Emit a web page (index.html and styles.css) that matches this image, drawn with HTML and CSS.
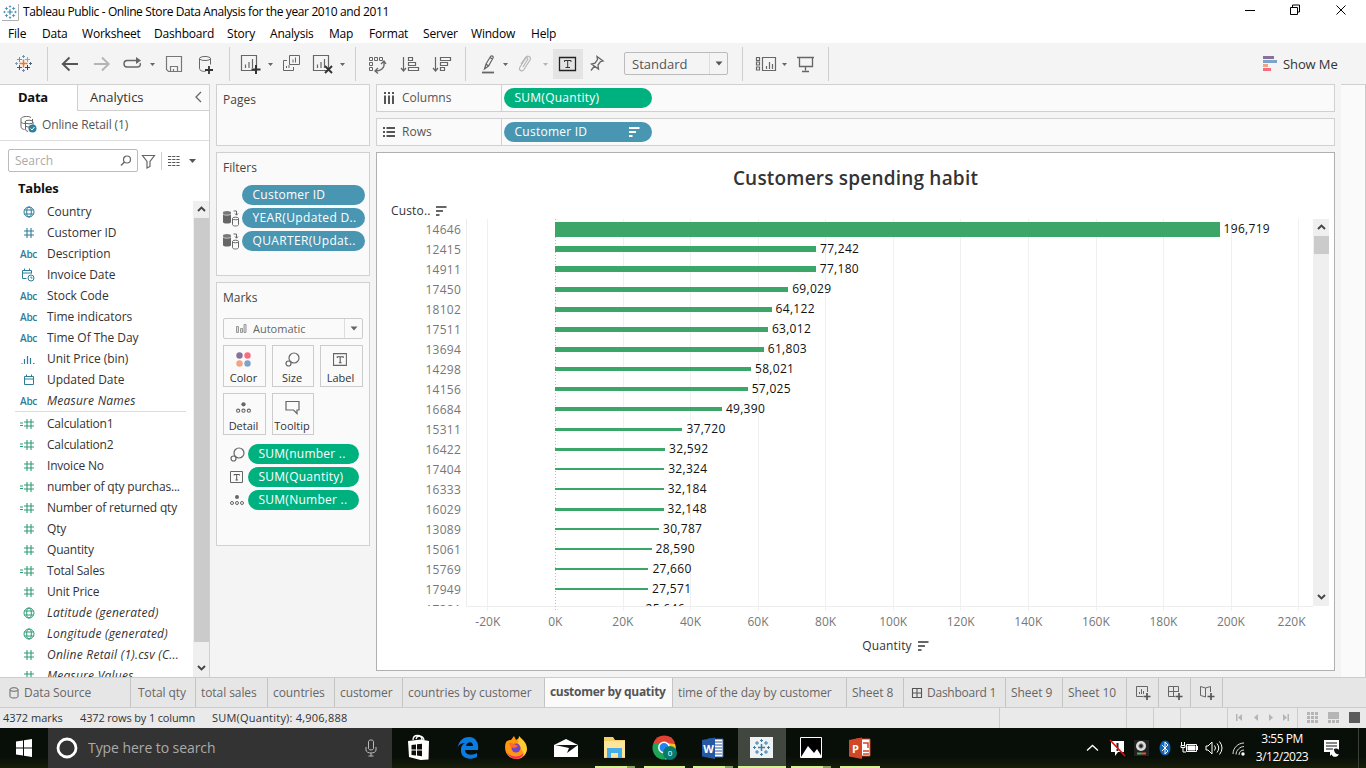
FILE: index.html
```html
<!DOCTYPE html>
<html lang="en">
<head>
<meta charset="utf-8">
<title>Tableau Public - Online Store Data Analysis</title>
<link rel="stylesheet" href="styles.css">
</head>
<body>
<svg class="defs" width="0" height="0">
  <symbol id="plus-logo" viewBox="0 0 18 18"><path d="M9 5.500v7M5.500 9h7" stroke-width="1.500"/><path d="M9 .5v3M7.500 2h3M9 14.500v3M7.500 16h3M2 7.500v3M.5 9h3M16 7.500v3M14.500 9h3M4.500 2.500v4M2.500 4.500h4M13.500 2.500v4M11.500 4.500h4M4.500 11.500v4M2.500 13.500h4M13.500 11.500v4M11.500 13.500h4" stroke-width="1"/></symbol>
  <symbol id="globe" viewBox="0 0 12 12"><g fill="none" stroke="currentColor"><circle cx="6" cy="6" r="5"/><ellipse cx="6" cy="6" rx="2.300" ry="5"/><path d="M1.500 4h9M1.500 8h9"/></g></symbol>
  <symbol id="hash" viewBox="0 0 12 12"><path d="M4 1v10M8 1v10M1 4h10M1 8h10" fill="none" stroke="currentColor" stroke-width="1.100"/></symbol>
  <symbol id="calc" viewBox="0 0 16 12"><path d="M8 1v10M12 1v10M5 4h10M5 8h10M1 5h3M1 7.500h3" fill="none" stroke="currentColor" stroke-width="1.100"/></symbol>
  <symbol id="cal" viewBox="0 0 12 12"><path d="M1.500 2.500h9v8h-9zM1.500 5h9M3.500.5v2M8.500.5v2" fill="none" stroke="currentColor"/></symbol>
  <symbol id="caltime" viewBox="0 0 14 14"><path d="M5.500 10.500h-4v-8h9v3M1.500 5h9M3.500.5v2M8.500.5v2" fill="none" stroke="currentColor"/><circle cx="10" cy="10" r="3" fill="none" stroke="currentColor"/><path d="M10 8.500V10h1.500" fill="none" stroke="currentColor"/></symbol>
  <symbol id="bin" viewBox="0 0 14 12"><path d="M.5 10.500h1M3.500 6v5M6.500 3v8M9.500 5v6M12 10.500h1.500" fill="none" stroke="currentColor" stroke-width="1.200"/></symbol>
  <symbol id="sort" viewBox="0 0 11 10"><path d="M0 1h10.500M0 5h7M0 9h3.500" stroke="currentColor" stroke-width="2"/></symbol>
  <symbol id="caret" viewBox="0 0 8 5"><path d="M.5.5h7L4 4.500z" fill="currentColor"/></symbol>
  <symbol id="chart" viewBox="0 0 22 20"><path d="M1.500 1.500h15v15h-15zM5.500 14v-3.500M9 14V8M12.500 14V5" fill="none" stroke="#666" stroke-width="1.200"/></symbol>
  <symbol id="size" viewBox="0 0 15 15"><g fill="none" stroke="#666" stroke-width="1.200"><circle cx="9" cy="6" r="5"/><circle cx="3.500" cy="11.500" r="2.500" fill="#fafafa"/></g></symbol>
  <symbol id="label" viewBox="0 0 14 12"><path d="M.5.5h12v11H.5z" fill="none" stroke="#666"/><path d="M4 4.500v-1h5.500v1M6.700 3.500v5.500M5.500 9h2.500" fill="none" stroke="#555"/></symbol>
  <symbol id="detail" viewBox="0 0 14 12"><circle cx="7" cy="3" r="2" fill="#666"/><g fill="none" stroke="#666"><circle cx="2" cy="9" r="1.500"/><circle cx="7" cy="9" r="1.500"/><circle cx="12" cy="9" r="1.500"/></g></symbol>
  <symbol id="ctx" viewBox="0 0 16 16"><path d="M0 2.500v9c0 2 8 2 8 0v-9z" fill="#666"/><ellipse cx="4" cy="2" rx="4" ry="1.500" fill="#777"/><path d="M0 3.500c1 1.500 7 1.500 8 0" fill="none" stroke="#fff" stroke-width=".7"/><g fill="#fafafa" stroke="#666"><path d="M9.500 8v6c0 2 6 2 6 0V8"/><ellipse cx="12.500" cy="8" rx="3" ry="1.300"/></g><path d="M10.500.5h3v4M12 3l1.500 1.700L15 3" fill="none" stroke="#666"/></symbol>
</svg>

<header class="titlebar">
  <svg class="app-icon" viewBox="0 0 18 18"><path d="M17.500 0v17.500H0" fill="none" stroke="#aaa"/><use href="#plus-logo" x="1" y="1" width="15" height="15" stroke="#3b86aa"/></svg>
  <span class="title">Tableau Public - Online Store Data Analysis for the year 2010 and 2011</span>
  <svg class="winbtns" viewBox="0 0 110 14"><path d="M1 7.500h10M46.500 4.500h7v7h-7zM48.500 4v-2h7v7h-2M92.500 2.500l9 9M101.500 2.500l-9 9" fill="none" stroke="#000"/></svg>
</header>
<nav class="menubar"><span class="m1">File</span><span class="m2">Data</span><span class="m3">Worksheet</span><span class="m4">Dashboard</span><span class="m5">Story</span><span class="m6">Analysis</span><span class="m7">Map</span><span class="m8">Format</span><span class="m9">Server</span><span class="m10">Window</span><span>Help</span></nav>

<div class="toolbar">
  <svg class="tools" width="620" height="41" viewBox="0 0 620 41" fill="none">
    <path d="M47.500 4v34M229.500 4v34M355.500 4v34M465.500 4v34" stroke="#cfcfcf"/>
    <path d="M23.500 16.500v8M19.500 20.500h8" stroke="#e8762d" stroke-width="1.500"/>
    <path d="M23.500 12v3M22 13.500h3" stroke="#7099a6"/><path d="M23.500 26v3M22 27.500h3" stroke="#7e84b5"/><path d="M16.500 19v3M15 20.500h3" stroke="#7b9fc1"/><path d="M30.500 19v3M29 20.500h3" stroke="#596879"/>
    <path d="M19.500 14v5M17 16.500h5" stroke="#5c9dad"/><path d="M27.500 14v5M25 16.500h5" stroke="#eb912c"/><path d="M19.500 22v5M17 24.500h5" stroke="#c72037"/><path d="M27.500 22v5M25 24.500h5" stroke="#1f457e"/>
    <path d="M78 21H63M69.500 14.500L62.800 21l6.700 6.500" stroke="#555" stroke-width="1.900"/>
    <path d="M94 21h15M102 14.500l6.700 6.500-6.700 6.500" stroke="#b4b4b4" stroke-width="1.900"/>
    <path d="M134 17.500h-7c-4 0-4 6.500 0 6.500h10c3 0 4-2 3-4M132 17.500h7" stroke="#666" stroke-width="1.400"/><path d="M136 14l5 3.500-5 3.500z" fill="#666"/>
    <path d="M166.500 13.500h15v15h-13l-2-2zM170.500 28v-4.500h7V28M173.500 28v-2" stroke="#777" stroke-width="1.200"/>
    <path d="M199.500 15.500v10c0 2 3 3 6 3M210.500 15.500v6" stroke="#666"/><ellipse cx="205" cy="15.500" rx="5.500" ry="2" stroke="#666"/><path d="M209 23v8M205 27h8" stroke="#333" stroke-width="1.800"/>
    <use href="#chart" x="240" y="11" width="22" height="20"/><path d="M256 22v9M251.500 26.500h9" stroke="#333" stroke-width="2"/>
    <path d="M289.500 12.500h10v9h-10zM287 17.500h-3.500v10h10V24M293 19.500v-3M295.500 19.500v-5M286.500 25v-2M289 25v-3" stroke="#666"/>
    <use href="#chart" x="312" y="11" width="22" height="20"/><path d="M325 23l7 7M332 23l-7 7" stroke="#333" stroke-width="1.900"/>
    <path d="M369.500 14.500h3v3h-3zM374.500 14.500h3v3h-3zM379.500 14.500h3v3h-3zM369.500 19.500h3v3h-3zM369.500 24.500h3v3h-3z" stroke="#666"/><path d="M384 19c1 6-3 9-8 9M381 21l3-3 2 3M378 25l-3 3 3 2.500" stroke="#666" stroke-width="1.300"/>
    <path d="M403.500 14v13M401 25l2.500 3 2.500-3M408.500 14.500h4v3h-4zM408.500 19.500h7v3h-7zM408.500 24.500h10v3h-10z" stroke="#666" stroke-width="1.200"/>
    <path d="M435.500 14v13M433 25l2.500 3 2.500-3M440.500 14.500h10v3h-10zM440.500 19.500h7v3h-7zM440.500 24.500h4v3h-4z" stroke="#666" stroke-width="1.200"/>
    <path d="M484.500 26l1.500-5 4.500-7.500c1-1.500 3.500 0 2.500 1.500L488.500 23zM486 21l2.500 2M490 14.500l2.500 1.500" stroke="#666" stroke-width="1.200"/><path d="M482 29.500h12" stroke="#666" stroke-width="1.800"/>
    <path d="M521 21l4.500-6.500c2-3 6.500-.5 4.500 2.500l-6 9.500c-2 3-6 .5-4-2.500l5.500-8.500c1-1.500 3-.5 2 1.200L523 24" stroke="#b5b5b5" stroke-width="1.200"/>
    <path d="M553 6h30v30h-30z" fill="#e4e4e4"/><path d="M559.500 14.500h16v13h-16z" stroke="#222" stroke-width="1.300"/><path d="M564.500 19v-1.500h6.500v1.500M567.700 17.500v7M565.500 24.500h4.500" stroke="#333"/>
    <path d="M597 13.500l6 4.500-2.500.5-2.500 3.500.5 4-7-5 3.500-.8 2.500-3.700zM594.500 23l-3.500 4.500" stroke="#666" stroke-width="1.300"/>
    <g fill="#666"><path d="M150 20h5l-2.500 3zM268 20h5l-2.500 3zM340 20h5l-2.500 3zM503 20h5l-2.500 3z"/><path d="M543 20h5l-2.500 3z" fill="#b5b5b5"/></g>
  </svg>
  <div class="fit"><span>Standard</span><i><svg width="8" height="5"><use href="#caret"/></svg></i></div>
  <svg class="tools2" width="120" height="41" fill="none"><path d="M13.500 4v34M99.500 4v34" stroke="#cfcfcf"/><path d="M27.500 14.500h3v3h-3zM27.500 19h3v3h-3zM27.500 24h3v3h-3zM33.500 14.500h13v13h-13zM37.500 26v-3M40.500 26v-7M43.500 26v-5" stroke="#666" stroke-width="1.200"/><path d="M53 20h5l-2.500 3z" fill="#666"/><path d="M68 14.500h17M70.500 14.500v9h13v-9M76.500 23.500v4M73 28.500h7" stroke="#666" stroke-width="1.300"/></svg>
  <div class="showme"><svg width="14" height="15"><path d="M0 0h11v3H0z" fill="#86719a"/><path d="M0 4h14v3H0z" fill="#7ea3cb"/><path d="M0 8h5v3H0z" fill="#f0a580"/><path d="M0 12h8v3H0z" fill="#fb6b80"/></svg><span>Show Me</span></div>
</div>

<main class="work">
  <aside class="datapane">
    <div class="dtabs"><b>Data</b><span>Analytics</span><svg width="7" height="12"><path d="M6 1L1 6l5 5" fill="none" stroke="#666" stroke-width="1.300"/></svg></div>
    <div class="source"><svg width="17" height="17" fill="none" stroke="#666"><path d="M11 1.500c-3-2-9-1-10 1v8c0 2 2 3 3.500 3M5.500 5v8c0 1.500 1 2 2.500 2.500M12.500 5V3"/><ellipse cx="9" cy="6" rx="4" ry="1.800"/><path d="M1 6c1 1 2 1.500 4 1.500M5.500 10c2 1.500 5 1.500 7.500 0M13 6v3"/><circle cx="12.500" cy="12.500" r="4" fill="#2f7f9f" stroke="none"/><path d="M10.500 12.500l1.500 1.500 2.500-3" stroke="#fff"/></svg><span>Online Retail (1)</span></div>
    <div class="searchrow">
      <div class="search"><span>Search</span><svg width="12" height="12"><circle cx="7" cy="4.500" r="3.500" fill="none" stroke="#666" stroke-width="1.200"/><path d="M4.500 7L1 10.500" stroke="#666" stroke-width="1.400"/></svg></div>
      <svg width="60" height="20"><path d="M4.500 4.500h12l-4.500 6v5l-3 1.500v-6.500z" fill="none" stroke="#666" stroke-width="1.200"/><path d="M23.500 1v18" stroke="#ccc"/><path d="M30 5.500h12M30 8.500h12M30 11.500h12M30 14.500h12" stroke="#555" stroke-width="1" stroke-dasharray="3.200 1"/><path d="M51 8h7l-3.500 4z" fill="#555"/></svg>
    </div>
    <h2 class="tables">Tables</h2>
    <div class="fieldwrap"><div class="fields" id="fields"></div>
      <div class="scroll fscroll"><svg width="9" height="8"><path d="M1 6l3.500-3.500L8 6" fill="none" stroke="#444" stroke-width="1.900"/></svg><i></i><svg width="9" height="8"><path d="M1 2l3.500 3.500L8 2" fill="none" stroke="#444" stroke-width="1.900"/></svg></div>
    </div>
  </aside>

  <section class="cards">
    <div class="card pages"><h3>Pages</h3></div>
    <div class="card filters"><h3>Filters</h3>
      <div class="pillrow"><em></em><span class="pill blue">Customer ID</span></div>
      <div class="pillrow"><em><svg width="16" height="17"><use href="#ctx"/></svg></em><span class="pill blue wide">YEAR(Updated D..</span></div>
      <div class="pillrow"><em><svg width="16" height="17"><use href="#ctx"/></svg></em><span class="pill blue wide">QUARTER(Updat..</span></div>
    </div>
    <div class="card marks"><h3>Marks</h3>
      <div class="marktype"><svg width="11" height="9" fill="#ddd" stroke="#999"><path d="M.5 2.500h2v6h-2zM4.500 4.500h2v4h-2zM8 .5h2v8H8z"/></svg><span>Automatic</span><i><svg width="8" height="5"><use href="#caret"/></svg></i></div>
      <div class="btns">
        <div><svg width="15" height="15"><circle cx="3.500" cy="3.500" r="3.200" fill="#86719a"/><circle cx="11.500" cy="3.500" r="3.200" fill="#fb6b80"/><circle cx="3.500" cy="11.500" r="3.200" fill="#f0a580"/><circle cx="11.500" cy="11.500" r="3.200" fill="#7ea3cb"/></svg>Color</div>
        <div><svg width="15" height="15"><use href="#size"/></svg>Size</div>
        <div><svg width="15" height="15"><use href="#label"/></svg>Label</div>
        <div><svg width="15" height="15"><use href="#detail"/></svg>Detail</div>
        <div><svg width="15" height="15"><path d="M1 1.500h13v8.500h-2v3.500L8.500 10H1z" fill="none" stroke="#666" stroke-width="1.200"/></svg>Tooltip</div>
      </div>
      <div class="pillrow g"><em><svg width="15" height="15"><use href="#size"/></svg></em><span class="pill green">SUM(number ..</span></div>
      <div class="pillrow g"><em><svg width="14" height="12"><use href="#label"/></svg></em><span class="pill green">SUM(Quantity)</span></div>
      <div class="pillrow g"><em><svg width="14" height="12"><use href="#detail"/></svg></em><span class="pill green">SUM(Number ..</span></div>
    </div>
  </section>

  <section class="canvas">
    <div class="shelf"><div class="sname"><svg width="12" height="12"><path d="M2 0v2M2 3.500V12M6 0v2M6 3.500V12M10 0v2M10 3.500V12" stroke="#555" stroke-width="2"/></svg>Columns</div><span class="pill green">SUM(Quantity)</span></div>
    <div class="shelf"><div class="sname"><svg width="12" height="12"><path d="M0 2h2M3.500 2H12M0 6h2M3.500 6H12M0 10h2M3.500 10H12" stroke="#555" stroke-width="1.800"/></svg>Rows</div><span class="pill blue">Customer ID<svg width="11" height="10"><use href="#sort"/></svg></span></div>
    <div class="viz">
      <h1>Customers spending habit</h1>
      <div class="rowhead">Custo..<svg width="11" height="10"><use href="#sort"/></svg></div>
      <div class="plotwrap">
        <div class="plot">
          <svg class="grid" width="848" height="392" id="grid"></svg>
          <div class="rows" id="rows"></div>
        </div>
        <div class="scroll vscroll"><svg width="9" height="8"><path d="M1 6l3.500-3.500L8 6" fill="none" stroke="#444" stroke-width="1.900"/></svg><i></i><svg width="9" height="8"><path d="M1 2l3.500 3.500L8 2" fill="none" stroke="#444" stroke-width="1.900"/></svg></div>
      </div>
      <div class="axis" id="axis"></div>
      <div class="axtitle">Quantity<svg width="11" height="10"><use href="#sort"/></svg></div>
    </div>
  </section>
  <aside class="rightpane"></aside>
</main>

<nav class="sheets">
  <span class="s0"><svg width="10" height="12"><path d="M1 2.500v7c0 2 8 2 8 0v-7" fill="none" stroke="#666"/><ellipse cx="5" cy="2.500" rx="4" ry="1.800" fill="none" stroke="#666"/></svg>Data Source</span>
  <span class="s1">Total qty</span><span class="s2">total sales</span><span class="s3">countries</span><span class="s4">customer</span><span class="s5">countries by customer</span><span class="s6">customer by quatity</span><span class="s7">time of the day by customer</span><span class="s8">Sheet 8</span>
  <span class="s9"><svg width="12" height="12"><path d="M1.500 1.500h9v9h-9zM6 1.500v9M1.500 6h9" fill="none" stroke="#555" stroke-width="1.100"/></svg>Dashboard 1</span><span class="s10">Sheet 9</span><span class="s11">Sheet 10</span>
  <span class="n1"><svg width="16" height="15"><path d="M8 11.500H1.500v-10h11V7M4.500 9V7M6.500 9V4M8.500 9V6" fill="none" stroke="#666"/><path d="M12 8v7M8.500 11.500h7" stroke="#555" stroke-width="1.700"/></svg></span>
  <span class="n1"><svg width="16" height="15"><path d="M8 11.500H1.500v-10h10V7M6.500 1.500v10M1.500 6.500h10" fill="none" stroke="#666"/><path d="M12 8v7M8.500 11.500h7" stroke="#555" stroke-width="1.700"/></svg></span>
  <span class="n1"><svg width="16" height="15"><path d="M7 12l-5.500-1.500v-9L6.500 3l5-1.500V7M6.500 3v9" fill="none" stroke="#666"/><path d="M12 8v7M8.500 11.500h7" stroke="#555" stroke-width="1.700"/></svg></span>
</nav>
<footer class="status"><span class="t1">4372 marks</span><span class="t2">4372 rows by 1 column</span><span class="t3">SUM(Quantity): 4,906,888</span>
  <svg width="367" height="20"><path d="M.5 0v20M127.500 0v20M154.500 0v20M181.500 0v20M228.500 0v20M298.500 0v20" stroke="#ccc"/><g fill="#b5b5b5"><path d="M237 6h1.500v7H237zM243 6v7l-4-3.500zM259 6v7l-4-3.500zM270 6v7l4-3.500zM284 6v7l4-3.500zM288.500 6h1.500v7h-1.500z"/><path d="M308 4h3v3h-3zM312 4h3v3h-3zM316 4h3v3h-3zM308 8h3v3h-3zM312 8h3v3h-3zM316 8h3v3h-3zM308 12h3v3h-3zM312 12h3v3h-3zM316 12h3v3h-3zM329 4h11v7h-11zM329 12h3v3h-3zM333 12h3v3h-3zM337 12h3v3h-3z"/></g><path d="M350 4h11v11h-11z" fill="#5c5c5c"/></svg>
</footer>

<div class="taskbar">
  <svg class="win" width="48" height="40"><path d="M16 13.500l7-1v7h-7zM24 12.300l8-1.200v8.400h-8zM16 20.500h7v7l-7-1zM24 20.500h8v8.500l-8-1.300z" fill="#fff"/></svg>
  <div class="tsearch"><svg width="22" height="22"><circle cx="11" cy="11" r="9" fill="none" stroke="#fff" stroke-width="2.800"/></svg><span>Type here to search</span><svg width="12" height="18"><path d="M3.500 2.500c0-2 5-2 5 0v7c0 2-5 2-5 0zM1 8v3c0 4 10 4 10 0V8M6 14v3M3.500 17h5" fill="none" stroke="#bbb"/></svg></div>
  <svg class="apps" width="486" height="40">
    <path d="M8 13l13-1.500 8 1.500-.5 18.500-8 .5L9 29z" fill="#fff"/><path d="M13 12c0-6 9-6 9 0M16 11c1-4 7-4 8 1" fill="none" stroke="#fff" stroke-width="1.300"/><path d="M11.500 17l4.500-.5v5h-4.500zM17 16.300l5-.5v5.700h-5zM11.500 22.500H16v5l-4.500-.5zM17 22.500h5v5.700l-5-.6z" fill="#0a0f08"/>
    <path d="M58 19c1-7 6-10 11-10 7 0 10 6 9 13H65c0 5 7 6 12 3v4c-8 4-17 1-16-8 0-3 2-5 4-6-4 0-6 2-7 4zM66 18h7c0-5-6-5-7 0z" fill="#0a7be0" fill-rule="evenodd"/>
    <path d="M106 14c2-2 4-2 5-2l3-4 2 4 3-2 3 3c7 5 6 16-4 18-11 1-15-9-12-17z" fill="#ff980e"/><path d="M119 8c4 4 8 7 8 13 0 3-2 6-4 7 1-6-4-9-5-13z" fill="#ffcb30"/><path d="M106 21c1 8 12 10 18 4-3 8-15 9-18-4z" fill="#f52d5e"/><circle cx="116" cy="20" r="4.500" fill="#7643c8"/><path d="M109 15c5 0 6 2 9 3-3 3-6 2-8 0z" fill="#ff6b24"/>
    <path d="M154 17l12-6 12 6v12h-24z" fill="#fff"/><path d="M155 17h23l-11 8 2-5z" fill="#111"/>
    <path d="M204 9h9l2 3h10v18h-21z" fill="#f5cf68"/><path d="M204 13h21v16h-21z" fill="#ffe59b"/><path d="M207 20h15v10h-4v-5h-7v5h-4z" fill="#43aee8"/>
    <circle cx="264" cy="20" r="11.500" fill="#20a357"/><path d="M253.500 15a11.500 11.500 0 0 1 21.500 0l-11 2z" fill="#e34133"/><path d="M275 16a11.500 11.500 0 0 1-10 15.500l4-11.500-4-5z" fill="#fbc116"/><circle cx="264" cy="19.500" r="5.200" fill="#2682ee" stroke="#fff" stroke-width="1.500"/><circle cx="270" cy="25" r="7" fill="#087b70"/><text x="270" y="28" class="badge">0</text>
    <path d="M308 11h15v18h-15z" fill="#fff" stroke="#2b579a"/><path d="M314 14h8M314 17h8M314 20h8M314 23h8M314 26h8" stroke="#2b579a"/><path d="M302 12l13-2.500v21.500l-13-2.500z" fill="#2457a4"/><text x="308.500" y="24.500" class="ico">W</text>
    <path d="M338 0h48v38h-48z" fill="#41463f"/><path d="M350 9h23v21h-23z" fill="#eef2f5"/><use href="#plus-logo" x="352.500" y="10.500" width="18" height="18" stroke="#3f7da5"/>
    <path d="M400.500 9.500h21v20h-21z" fill="#000" stroke="#fff"/><path d="M401 29l7-11 6 7 3-4 5 8z" fill="#fff"/>
    <path d="M456 11h14v17h-14z" fill="#fff" stroke="#c8411f"/><path d="M463 15h5v5M463 23h6M463 26h6" stroke="#d24726" stroke-width="1.500" fill="none"/><path d="M449 12l13-2.500v21.500l-13-2.500z" fill="#d24726"/><text x="455.500" y="24.500" class="ico">P</text>
    <path d="M195 38h32v2h-32zM244 38h41v2h-41zM293 38h32v2h-32zM338 38h48v2h-48zM391 38h32v2h-32zM440 38h40v2h-40z" fill="#d6f295"/><path d="M227 38h8v2h-8zM325 38h8v2h-8zM423 38h8v2h-8z" fill="#8fa265"/>
  </svg>
  <svg class="tray" width="166" height="40" fill="none" stroke="#fff">
    <path d="M7 22.500l5.500-5 5.500 5" stroke-width="1.300"/>
    <path d="M31 13h13v11h-6l-3 4v-4h-4z" fill="#fff" stroke="none"/><path d="M37.500 15v5M37.500 21v2" stroke="#222" stroke-width="2"/><path d="M30 12l15 16" stroke="#e01010" stroke-width="1.600"/>
    <path d="M54 12h15v16H54z" fill="#222" stroke="none"/><circle cx="61" cy="18" r="5" fill="#ddd" stroke="none"/><circle cx="61" cy="18" r="2.200" fill="#222" stroke="#888"/><path d="M57 25.500h4" stroke="#4caf50" stroke-width="2"/><path d="M61 25.500h5" stroke="#e05040" stroke-width="2"/>
    <ellipse cx="85" cy="20" rx="5.500" ry="7.500" fill="#1464b4" stroke="none"/><path d="M82 17l6 6-3 3V14l3 3-6 6"/>
    <path d="M106.500 16.500h10v7h-10z"/><path d="M108 18h7v4h-7z" fill="#fff"/><path d="M117.500 18v4M101.500 14v3M104.500 14v3M101 17.500h4v2h-4zM103 20v4h3"/>
    <path d="M126 18h2l4-4v12l-4-4h-2zM134.500 17.500q2 2.500 0 5M137 15.500q3.500 4.500 0 9M139.500 13.500q5 6.500 0 13"/>
    <path d="M153 26c0-6 5-11 11-11M156 26.500c0-4 4-8 8-8M159 27c0-3 2-5 5-5" stroke="#ddd"/><circle cx="163" cy="26" r="1.700" fill="#fff" stroke="none"/>
  </svg>
  <div class="clock"><span>3:55 PM</span><span>3/12/2023</span></div>
  <svg class="notif" width="45" height="40"><path d="M6 12h15v12h-5l-4 4v-4H6z" fill="#fff"/><path d="M8 15h11M8 18h11M8 21h7" stroke="#111"/><circle cx="18" cy="24" r="3.500" fill="#111"/><path d="M16 21a4 4 0 1 0 5 5c-3 1-5-2-5-5z" fill="#fff"/><path d="M40.500 0v40" stroke="#3c4038"/></svg>
</div>
<script src="script.js"></script>
</body>
</html>
```
FILE: styles.css
```css
* { box-sizing: border-box; }
body { margin: 0; width: 1366px; height: 768px; overflow: hidden; background: #fff; display: flex; flex-direction: column; font: 12px/16px "Open Sans", "Noto Sans", sans-serif; color: #333; }
h1, h2, h3 { margin: 0; font-weight: normal; }
svg { display: block; flex: none; }
i, em { font-style: normal; }
span, b { white-space: nowrap; }
.defs { position: absolute; }

.titlebar { height: 22px; display: flex; align-items: center; padding: 2px 0 0 2px; color: #000; }
.app-icon { width: 17px; height: 17px; margin-right: 4px; }
.title { letter-spacing: -.38px; flex: 1; }
.winbtns { width: 110px; height: 14px; margin: -4px 12px 0 0; }
.menubar { height: 21px; display: flex; padding: 4px 0 0 8px; color: #000; letter-spacing: -.2px; }
.menubar span { width: 40px; }
.menubar .m1 { width: 34px; }
.menubar .m3 { width: 72px; }
.menubar .m4 { width: 73px; }
.menubar .m5 { width: 43px; }
.menubar .m6 { width: 59px; }
.menubar .m8 { width: 54px; }
.menubar .m9 { width: 48px; }
.menubar .m10 { width: 60px; }

.toolbar { height: 41px; flex: none; background: #f4f4f4; display: flex; align-items: center; }
.toolbar .tools { margin-right: 4px; }
.fit { width: 104px; height: 23px; border: 1px solid #bbb; border-radius: 2px; display: flex; align-items: center; font-size: 13px; color: #555; padding-left: 7px; }
.fit span { flex: 1; }
.fit i { width: 18px; height: 21px; border-left: 1px solid #ddd; display: flex; align-items: center; justify-content: center; }
.tools2 { margin-left: 1px; }
.showme { margin-left: auto; display: flex; align-items: center; gap: 6px; width: 103px; font-size: 13px; letter-spacing: -.1px; }

.work { height: 593px; flex: none; background: #f4f4f4; display: flex; gap: 6px; }
.datapane { width: 210px; background: #fff; border-top: 1px solid #d0d0d0; border-right: 1px solid #d0d0d0; display: flex; flex-direction: column; }
.dtabs { height: 26px; display: flex; font-size: 13px; align-items: stretch; line-height: 25px; }
.dtabs b { width: 77px; padding-left: 18px; color: #111; letter-spacing: -.3px; }
.dtabs span { flex: 1; background: #fafafa; border-left: 1px solid #d0d0d0; border-bottom: 1px solid #d0d0d0; padding-left: 12px; }
.dtabs svg { box-sizing: content-box; background: #fafafa; border-bottom: 1px solid #d0d0d0; padding: 6px 7px 7px 0; }
.source { height: 30px; border-bottom: 1px solid #ddd; display: flex; align-items: center; padding: 0 0 2px 20px; gap: 5px; color: #555; letter-spacing: -.12px; }
.searchrow { display: flex; height: 38px; padding: 1px 0 0 8px; align-items: center; }
.search { width: 130px; height: 23px; border: 1px solid #bbb; border-radius: 2px; display: flex; justify-content: space-between; align-items: center; padding: 0 5px 0 6px; color: #aaa; }
.tables { font-size: 13px; font-weight: bold; color: #111; padding: 0 0 0 18px; height: 22px; line-height: 18px; letter-spacing: -.2px; }
.fieldwrap { flex: 1; display: flex; overflow: hidden; height: 475px; }
.fields { flex: 1; overflow: hidden; }
.field { height: 21px; display: flex; align-items: center; letter-spacing: -.05px; }
.field em { width: 47px; padding-right: 12px; display: flex; justify-content: flex-end; color: #2e7c98; }
.field em.abc { font: 600 10px/16px "Open Sans", sans-serif; padding-right: 10px; letter-spacing: -.3px; }
.field.m { letter-spacing: -.2px; }
.field.m em { color: #2f9c74; }
.field.it { letter-spacing: .24px; }
.field.it span { font-style: italic; }
.sep { height: 1px; margin: 0 7px 1px 15px; background: #ddd; }
.scroll { background: #efefef; display: flex; flex-direction: column; align-items: center; width: 16px; justify-content: flex-start; }
.scroll svg { margin: 4px 0 5px; }
.scroll i { width: 15px; background: #cbcbcb; }
.scroll svg:last-child { margin-top: auto; }
.fscroll i { height: 424px; }

.cards { width: 154px; display: flex; flex-direction: column; gap: 6px; }
.card { background: #fafafa; border: 1px solid #d0d0d0; padding: 7px 4px 0 6px; color: #444; }
.card h3 { font-size: 12px; }
.pages { height: 62px; }
.filters { height: 124px; }
.filters h3 { margin-bottom: 9px; }
.marks { height: 264px; }
.pillrow { display: flex; align-items: center; margin-bottom: 3px; }
.pillrow em { width: 19px; display: flex; }
.pill { flex: 1; height: 20px; line-height: 19px; border-radius: 10px; padding-left: 10.500px; color: #fff; overflow: hidden; letter-spacing: .25px; }
.pill.wide { letter-spacing: .35px; }
.blue { background: #4996b2; }
.green { background: #00b180; }
.pillrow.g em { width: 25px; padding-left: 7px; }
.pillrow.g { padding-right: 6px; }
.marktype { margin: 12px 0 6px; width: 140px; height: 21px; border: 1px solid #ccc; border-radius: 2px; display: flex; align-items: center; padding-left: 12px; font-size: 11px; gap: 6px; color: #666; }
.marktype i { margin-left: auto; width: 18px; height: 19px; border-left: 1px solid #ddd; display: flex; align-items: center; justify-content: center; }
.btns { display: grid; grid-template-columns: 43px 42px 43px; gap: 6px; margin-bottom: 9px; }
.btns div { height: 42px; border: 1px solid #ccc; display: flex; flex-direction: column; align-items: center; gap: 3px; padding: 6px 2px 0 0; font-size: 11px; line-height: 16px; color: #333; }

.canvas { width: 959px; display: flex; flex-direction: column; gap: 6px; }
.shelf { height: 28px; flex: none; background: #fafafa; border: 1px solid #d0d0d0; display: flex; align-items: center; color: #555; }
.sname { width: 125px; height: 26px; border-right: 1px solid #d0d0d0; display: flex; align-items: center; padding-left: 6px; gap: 7px; margin-right: 2px; }
.shelf .pill { flex: none; width: 148px; display: flex; }
.shelf .pill svg { margin: 5px 12px 0 auto; }
.viz { height: 519px; background: #fff; border: 1px solid #b0b0b0; display: flex; flex-direction: column; }
.viz h1 { height: 49px; padding-top: 12px; text-align: center; font: 600 19px/26px "Open Sans", sans-serif; letter-spacing: .2px; }
.rowhead { height: 17px; display: flex; align-items: center; padding-left: 14px; gap: 5px; letter-spacing: .15px; }
.rowhead svg, .axtitle svg { color: #666; }
.plotwrap { height: 392px; display: flex; }
.plot { width: 936px; height: 387px; position: relative; }
.grid { position: absolute; left: 88px; top: 0; }
.rows { position: relative; height: 387px; overflow: hidden; }
.row { height: 20px; display: flex; align-items: center; }
.row span { width: 84px; text-align: right; color: #777; letter-spacing: .25px; padding-top: 1px; }
.row i { background: #3ca668; margin-left: 94px; flex: none; }
.row b { font-weight: normal; color: #111; margin-left: 4px; letter-spacing: .3px; }
.vscroll { height: 387px; }
.vscroll i { height: 18px; }
.axis { display: flex; margin-left: 77px; height: 26px; padding-top: 3px; color: #777; }
.axis span { width: 67.570px; flex: none; text-align: center; }
.axis span:last-child { margin-left: -7px; }
.axtitle { display: flex; justify-content: center; align-items: center; gap: 6px; padding-left: 80px; height: 18px; letter-spacing: .15px; }
.rightpane { width: 25px; background: #fafafa; border-top: 1px solid #d0d0d0; border-right: 1px solid #ccc; }

.sheets { height: 31px; flex: none; background: #e6e6e6; border-top: 1px solid #ccc; border-bottom: 1px solid #ccc; display: flex; color: #666; }
.sheets span { border-right: 1px solid #c4c4c4; line-height: 30px; padding-left: 5px; display: flex; align-items: center; letter-spacing: -.07px; overflow: hidden; }
.sheets .s0 { width: 131px; padding-left: 9px; gap: 5px; }
.sheets .s1 { width: 65px; padding-left: 7px; }
.sheets .s2 { width: 72px; }
.sheets .s3 { width: 67px; }
.sheets .s4 { width: 68px; }
.sheets .s5 { width: 142px; }
.sheets .s6 { width: 128px; background: #fafafa; font-weight: bold; color: #555; line-height: 27px; align-items: flex-start; letter-spacing: -.3px; }
.sheets .s7 { width: 174px; letter-spacing: -.12px; }
.sheets .s8 { width: 57px; }
.sheets .s9 { width: 102px; padding-left: 7px; gap: 4px; letter-spacing: -.25px; }
.sheets .s10 { width: 57px; }
.sheets .s11 { width: 64px; }
.sheets .n1 { width: 32px; padding-left: 8px; }
.status { height: 20px; flex: none; background: #eaeaea; display: flex; font-size: 11px; line-height: 20px; padding-left: 3px; }
.status .t1 { width: 77px; }
.status .t2 { width: 132px; letter-spacing: -.15px; }
.status .t3 { flex: 1; letter-spacing: .22px; }

.taskbar { height: 40px; flex: none; background: linear-gradient(#080e08 0 70%, #171e08); display: flex; color: #fff; }
.tsearch { width: 344px; background: #333; display: flex; align-items: center; padding: 0 15px 0 8px; font-size: 14px; color: #aaa; gap: 10px; }
.tsearch span { flex: 1; letter-spacing: -.07px; }
.apps { margin-left: 8px; }
.badge { fill: #fff; font: 8px "Open Sans", sans-serif; text-anchor: middle; }
.ico { fill: #fff; font: bold 11px "Open Sans", sans-serif; text-anchor: middle; }
.tray { margin-left: 194px; }
.clock { width: 72px; display: flex; flex-direction: column; align-items: center; padding-top: 2px; line-height: 18px; letter-spacing: -.5px; }
.notif { margin-left: 0; }
```
FILE: script.js
```js
const fields = [
  ["globe", "Country"], ["hash", "Customer ID"], ["abc", "Description"], ["caltime", "Invoice Date"],
  ["abc", "Stock Code"], ["abc", "Time indicators"], ["abc", "Time Of The Day"], ["bin", "Unit Price (bin)"],
  ["cal", "Updated Date"], ["abc", "Measure Names", "it"], null,
  ["calc", "Calculation1", "m"], ["calc", "Calculation2", "m"], ["hash", "Invoice No", "m"],
  ["calc", "number of qty purchas...", "m"], ["calc", "Number of returned qty", "m"], ["hash", "Qty", "m"],
  ["hash", "Quantity", "m"], ["calc", "Total Sales", "m"], ["hash", "Unit Price", "m"],
  ["globe", "Latitude (generated)", "m it"], ["globe", "Longitude (generated)", "m it"],
  ["hash", "Online Retail (1).csv (C...", "m it"], ["hash", "Measure Values", "m it"]
];
const widths = { globe: 12, hash: 12, calc: 16, cal: 12, caltime: 14, bin: 14 };
document.getElementById("fields").innerHTML = fields.map(f => {
  if (!f) return '<div class="sep"></div>';
  const [icon, name, cls = ""] = f;
  const mark = icon === "abc" ? '<em class="abc">Abc</em>'
    : `<em><svg width="${widths[icon]}" height="${icon === "caltime" ? 14 : 12}"><use href="#${icon}"/></svg></em>`;
  return `<div class="field ${cls}">${mark}<span>${name}</span></div>`;
}).join("");

const customers = [
  [14646, 196719, 15], [12415, 77242, 6], [14911, 77180, 6], [17450, 69029, 5], [18102, 64122, 5],
  [17511, 63012, 5], [13694, 61803, 5], [14298, 58021, 4], [14156, 57025, 4], [16684, 49390, 4],
  [15311, 37720, 3], [16422, 32592, 3], [17404, 32324, 2], [16333, 32184, 2], [16029, 32148, 3],
  [13089, 30787, 2], [15061, 28590, 2], [15769, 27660, 2], [17949, 27571, 2], [17381, 25646, 2]
];
const perUnit = 67.57 / 20000;
document.getElementById("rows").innerHTML = customers.map(([id, qty, h]) =>
  `<div class="row"><span>${id}</span><i style="width:${(qty * perUnit).toFixed(1)}px;height:${h}px"></i><b>${qty.toLocaleString("en-US")}</b></div>`
).join("");

let lines = '<path d="M1.5 0V387.500M1 387.500H848" stroke="#ededed" fill="none"/>';
let labels = "";
for (let k = -20; k <= 220; k += 20) {
  const x = Math.round(90 + k * 67.57 / 20) + .5;
  lines += k === 0
    ? `<path d="M${x} 0V392" stroke="#bbb" stroke-dasharray="1 2"/>`
    : `<path d="M${x} 0V392" stroke="#f0f0f0"/>`;
  labels += `<span>${k}K</span>`;
}
document.getElementById("grid").innerHTML = lines;
document.getElementById("axis").innerHTML = labels;
```
